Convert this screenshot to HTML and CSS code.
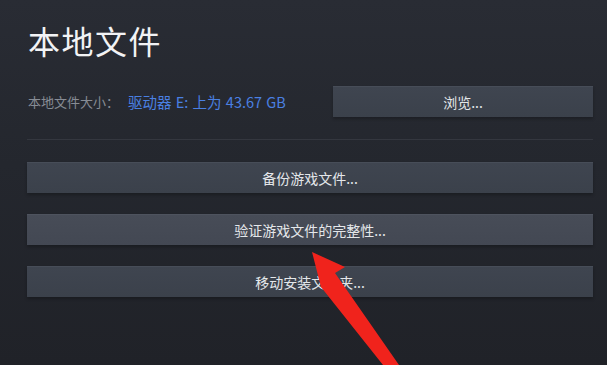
FILE: index.html
```html
<!DOCTYPE html>
<html lang="zh-CN">
<head>
<meta charset="utf-8">
<title>本地文件</title>
<link rel="stylesheet" href="styles.css">
</head>
<body>
<div class="panel">
  <h1 class="title">本地文件</h1>
  <div class="size-row">
    <div class="size-info">
      <span class="size-label">本地文件大小：</span>
      <span class="size-link">驱动器 E: 上为 43.67 GB</span>
    </div>
    <button class="btn btn-browse">浏览...</button>
  </div>
  <div class="separator"></div>
  <div class="actions">
    <button class="btn">备份游戏文件...</button>
    <button class="btn btn-hover">验证游戏文件的完整性...</button>
    <button class="btn">移动安装文件夹...</button>
  </div>
</div>
<svg class="arrow" width="607" height="365" viewBox="0 0 607 365">
  <polygon points="312,252 345,267 335,273 399,365 383,365 321,287" fill="#f0231c"/>
</svg>
</body>
</html>
```

FILE: styles.css
```css
html, body {
  margin: 0;
  padding: 0;
}
body {
  width: 607px;
  height: 365px;
  overflow: hidden;
  position: relative;
  background: linear-gradient(180deg, #292c34 0%, #24272e 45%, #202228 100%);
  font-family: "Noto Sans CJK SC", "Noto Sans", "Liberation Sans", sans-serif;
}
.panel {
  box-sizing: border-box;
  height: 365px;
  padding: 20px 14px 0 27px;
  border-left: 8px solid #2b2e36;
  margin-left: -8px;
}
.title {
  margin: 0 0 0 1px;
  font-size: 32px;
  line-height: 40px;
  font-weight: 400;
  color: #f2f3f5;
  letter-spacing: 1.5px;
}
.size-row {
  margin-top: 26px;
  display: flex;
  align-items: center;
  justify-content: space-between;
}
.size-info {
  display: flex;
  align-items: center;
  font-size: 13px;
  padding-left: 1px;
}
.size-label {
  color: #878c95;
}
.size-link {
  color: #4a80e2;
  margin-left: 9px;
  font-size: 14.5px;
  word-spacing: 1px;
}
.btn {
  display: block;
  box-sizing: border-box;
  height: 31px;
  border: none;
  border-top: 1px solid #474d58;
  background: linear-gradient(180deg, #3f4550 0%, #3b414b 100%);
  color: #e4e7ea;
  font-family: "Noto Sans CJK SC", "Noto Sans", "Liberation Sans", sans-serif;
  font-size: 14px;
  padding: 0;
  box-shadow: 0 2px 3px rgba(0, 0, 0, 0.25);
}
.btn-browse {
  width: 260px;
}
.btn-hover {
  background: linear-gradient(180deg, #474c57 0%, #434853 100%);
  border-top-color: #4e535e;
}
.separator {
  margin-top: 22px;
  height: 1px;
  background: #34373f;
}
.actions {
  margin-top: 22px;
  display: flex;
  flex-direction: column;
  gap: 21px;
}
.actions .btn {
  width: 100%;
}
.arrow {
  position: absolute;
  left: 0;
  top: 0;
}
```
